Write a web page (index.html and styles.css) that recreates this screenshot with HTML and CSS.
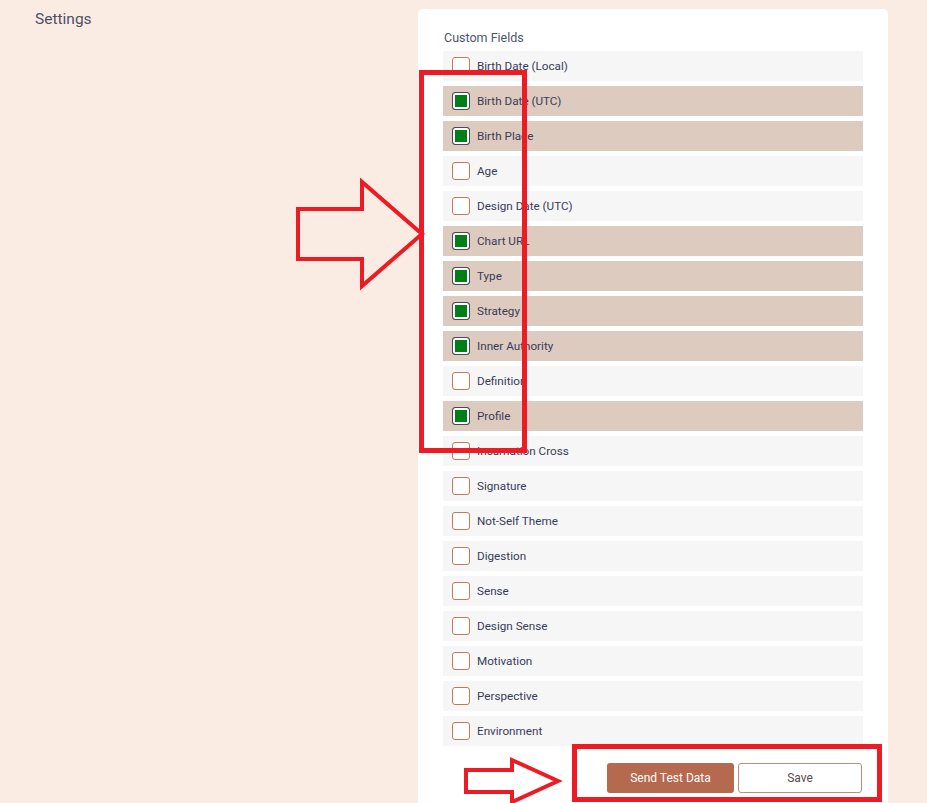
FILE: index.html
```html
<!DOCTYPE html>
<html lang="en">
<head>
    <meta charset="UTF-8">
    <title>Settings</title>
    <link rel="stylesheet" href="styles.css">
</head>
<body>
    <div class="page">
        <div class="sidebar">
            <h1 class="page-title">Settings</h1>
        </div>

        <!-- fields card -->
        <div class="card">
            <div class="section-label">Custom Fields</div>
            <div class="field-list">
                <label class="field"><span class="box"></span>Birth Date (Local)</label>
                <label class="field checked"><span class="box"></span>Birth Date (UTC)</label>
                <label class="field checked"><span class="box"></span>Birth Place</label>
                <label class="field"><span class="box"></span>Age</label>
                <label class="field"><span class="box"></span>Design Date (UTC)</label>
                <label class="field checked"><span class="box"></span>Chart URL</label>
                <label class="field checked"><span class="box"></span>Type</label>
                <label class="field checked"><span class="box"></span>Strategy</label>
                <label class="field checked"><span class="box"></span>Inner Authority</label>
                <label class="field"><span class="box"></span>Definition</label>
                <label class="field checked"><span class="box"></span>Profile</label>
                <label class="field"><span class="box"></span>Incarnation Cross</label>
                <label class="field"><span class="box"></span>Signature</label>
                <label class="field"><span class="box"></span>Not-Self Theme</label>
                <label class="field"><span class="box"></span>Digestion</label>
                <label class="field"><span class="box"></span>Sense</label>
                <label class="field"><span class="box"></span>Design Sense</label>
                <label class="field"><span class="box"></span>Motivation</label>
                <label class="field"><span class="box"></span>Perspective</label>
                <label class="field"><span class="box"></span>Environment</label>
            </div>

            <div class="btn-group">
                <button class="btn btn-primary">Send Test Data</button>
                <button class="btn btn-outline">Save</button>
            </div>
        </div>
    </div>

    <!-- red annotation marks drawn over the screenshot -->
    <svg class="marks" width="927" height="803" viewBox="0 0 927 803">
        <g fill="none" stroke="#ed1c24">
            <rect x="421.5" y="72.5" width="103" height="378" stroke-width="5"/>
            <polygon points="298,209 362,209 362,182 422,234 362,286 362,259 298,259" stroke-width="4"/>
            <rect x="574.5" y="746.5" width="305" height="53" stroke-width="5"/>
            <polygon points="466,770 512,770 512,760 558,781 512,802 512,792 466,792" stroke-width="4"/>
        </g>
    </svg>
</body>
</html>
```

FILE: styles.css
```css
/* base */
html, body {
    margin: 0;
    height: 100%;
    overflow: hidden;
}

body {
    font-family: Roboto, "Liberation Sans", Arial, sans-serif;
    background-color: #fbece3;
    color: #3d4160;
    position: relative;
}

.page {
    display: flex;
    align-items: flex-start;
}

.sidebar {
    width: 383px;
    padding: 9px 0 0 35px;
}

.page-title {
    margin: 0;
    font-size: 15.5px;
    font-weight: 400;
    line-height: 20px;
    color: #4b5068;
}

/* card */
.card {
    width: 420px;
    margin-top: 9px;
    padding: 21px 25px 30px;
    background: #fff;
    border-radius: 5px;
}

.section-label {
    font-size: 12.5px;
    line-height: 16px;
    color: #4a5570;
    margin: 0 0 5px 1px;
}

.field-list {
    display: flex;
    flex-direction: column;
    gap: 5px;
}

.field {
    display: flex;
    align-items: center;
    gap: 7px;
    height: 30px;
    padding-left: 9px;
    background: #f6f6f6;
    font-size: 11.7px;
    color: #383c5a;
}

.field.checked {
    background: #decbbf;
}

/* checkbox */
.box {
    box-sizing: border-box;
    width: 18px;
    height: 18px;
    border: 1.5px solid #c27a5c;
    border-radius: 3px;
    background: #fff;
}

.field.checked .box {
    border-color: #4a4a5e;
    background: #007f16;
    box-shadow: inset 0 0 0 2px #fff;
}

/* buttons */
.btn-group {
    display: flex;
    justify-content: flex-end;
    gap: 4px;
    margin-top: 17px;
    padding-right: 1px;
}

.btn {
    height: 30px;
    border-radius: 3px;
    font-family: inherit;
    font-size: 12px;
    cursor: pointer;
}

.btn-primary {
    width: 127px;
    background: #b5694e;
    color: #fff;
    border: none;
}

.btn-outline {
    width: 124px;
    background: #fff;
    color: #5a4a4a;
    border: 1px solid #c58a72;
}

/* annotations */
.marks {
    position: absolute;
    top: 0;
    left: 0;
    pointer-events: none;
}
```
